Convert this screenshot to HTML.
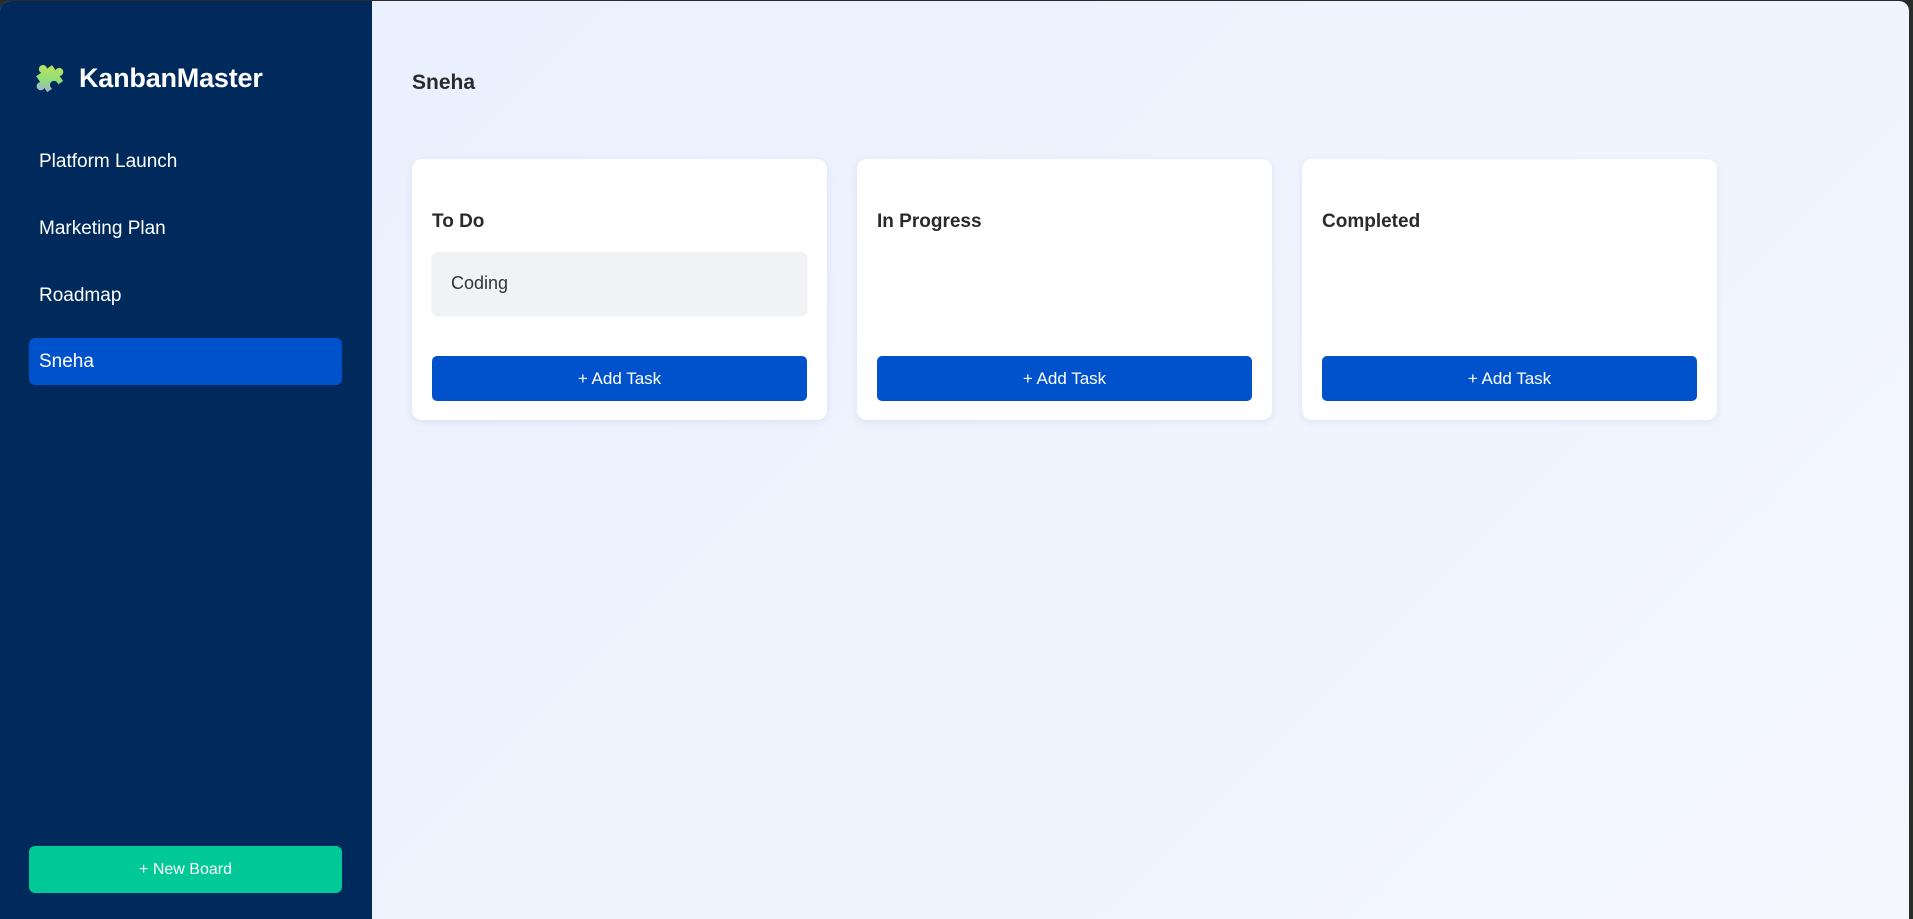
<!DOCTYPE html>
<html><head><meta charset="utf-8"><style>
*{box-sizing:border-box;margin:0;padding:0}
html,body{width:1913px;height:919px;overflow:hidden;background:#2b2b2b;font-family:"Liberation Sans",sans-serif}
.win{position:absolute;left:0;top:1px;width:1909px;height:918px;border-radius:10px 10px 0 0;overflow:hidden;background:linear-gradient(135deg,#e8effd,#f4f7fe)}
.side{position:absolute;left:0;top:0;width:372px;height:918px;background:#002a5c}
.logo{position:absolute;left:33px;top:60px;display:flex;align-items:center}
.logo span{color:#fff;font-weight:bold;font-size:27px;margin-left:12px;letter-spacing:-0.2px}
.nav{position:absolute;left:29px;width:313px;height:47px;border-radius:6px;color:#fff;font-size:19px;padding-left:10px;line-height:47px}
.nav.act{background:#0052cc}
.nb{position:absolute;left:29px;top:845px;width:313px;height:47px;border-radius:6px;background:#00c896;color:#fff;font-size:16px;text-align:center;line-height:47px}
h1{position:absolute;left:412px;top:70px;font-size:21px;color:#2a2a2a;font-weight:bold}
.card{position:absolute;top:158px;width:415px;height:261px;background:#fff;border-radius:10px;box-shadow:0 2px 8px rgba(0,40,120,.08)}
.card h2{position:absolute;left:20px;top:52px;font-size:19px;color:#2a2a2a;font-weight:bold}
.task{position:absolute;left:20px;top:93px;width:375px;height:63px;background:#f1f2f4;border-radius:6px;box-shadow:0 1px 2px rgba(0,0,0,.08);font-size:18px;color:#333;padding-left:19px;line-height:63px}
.btn{position:absolute;left:20px;top:197px;width:375px;height:45px;background:#0052cc;border-radius:5px;color:#fff;font-size:17px;text-align:center;line-height:45px}
</style></head><body>
<div class="win">
<div class="side">
<div class="logo"><svg width="34" height="34" viewBox="0 0 30 30"><defs><linearGradient id="g" x1="1" y1="0" x2="0" y2="1"><stop offset="0" stop-color="#d8e24a"/><stop offset=".6" stop-color="#8fe07a"/><stop offset="1" stop-color="#b69cf0"/></linearGradient></defs><path d="M5 6h6a4 4 0 1 1 7 0h6v6a4 4 0 1 1 0 7v6h-6a4 4 0 1 0-7 0H5v-5a4 4 0 1 1 0-7z" fill="url(#g)" transform="rotate(-35 15 15) scale(.9) translate(1.5 1.5)"/></svg><span>KanbanMaster</span></div>
<div class="nav" style="top:137px">Platform Launch</div>
<div class="nav" style="top:204px">Marketing Plan</div>
<div class="nav" style="top:271px">Roadmap</div>
<div class="nav act" style="top:337px">Sneha</div>
<div class="nb">+ New Board</div>
</div>
<h1>Sneha</h1>
<div class="card" style="left:412px"><h2>To Do</h2><div class="task">Coding</div><div class="btn">+ Add Task</div></div>
<div class="card" style="left:857px"><h2>In Progress</h2><div class="btn">+ Add Task</div></div>
<div class="card" style="left:1302px"><h2>Completed</h2><div class="btn">+ Add Task</div></div>
</div>
</body></html>
